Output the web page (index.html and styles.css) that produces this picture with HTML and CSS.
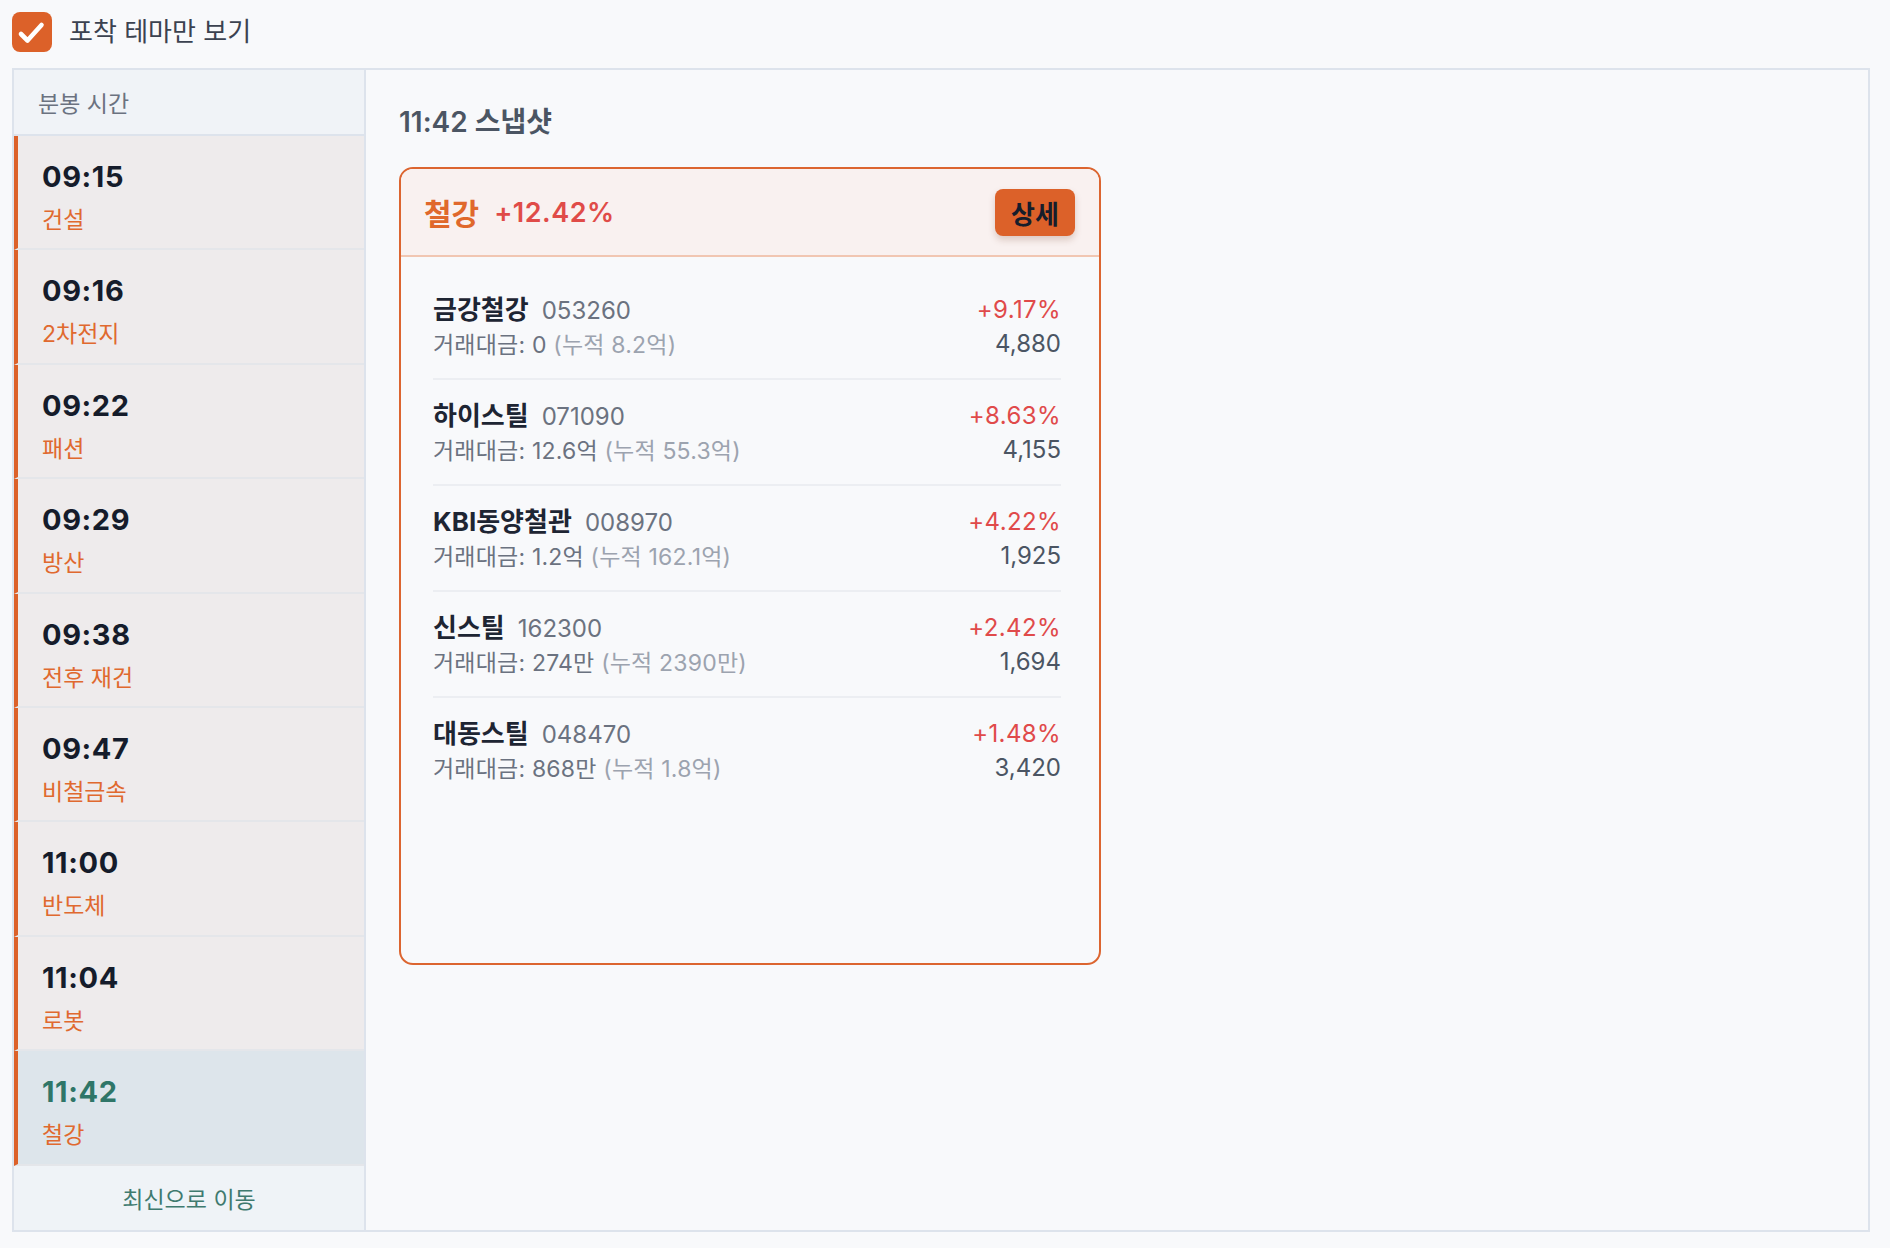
FILE: index.html
```html
<!DOCTYPE html>
<html lang="ko">
<head>
<meta charset="utf-8">
<title>포착 테마 스냅샷</title>
<link rel="stylesheet" href="styles.css">
</head>
<body>
<div class="topbar">
  <span class="checkbox">
    <svg width="40" height="40" viewBox="0 0 40 40"><rect x="0" y="0" width="40" height="40" rx="8" fill="#dc6129"/><path d="M9 22 L15.5 28.5 L29.5 13" fill="none" stroke="#fff" stroke-width="4.6" stroke-linecap="round" stroke-linejoin="round"/></svg>
  </span>
  <span class="toplabel">포착 테마만 보기</span>
</div>
<div class="frame">
  <aside class="sidebar">
    <div class="side-head">분봉 시간</div>
    <ul class="slots">
      <li class="slot"><div class="time">09:15</div><div class="theme">건설</div></li>
      <li class="slot"><div class="time">09:16</div><div class="theme">2차전지</div></li>
      <li class="slot"><div class="time">09:22</div><div class="theme">패션</div></li>
      <li class="slot"><div class="time">09:29</div><div class="theme">방산</div></li>
      <li class="slot"><div class="time">09:38</div><div class="theme">전후 재건</div></li>
      <li class="slot"><div class="time">09:47</div><div class="theme">비철금속</div></li>
      <li class="slot"><div class="time">11:00</div><div class="theme">반도체</div></li>
      <li class="slot"><div class="time">11:04</div><div class="theme">로봇</div></li>
      <li class="slot active"><div class="time">11:42</div><div class="theme">철강</div></li>
    </ul>
    <div class="side-foot">최신으로 이동</div>
  </aside>
  <main class="content">
    <h2 class="snap-title">11:42 스냅샷</h2>
    <section class="card">
      <header class="card-head">
        <span class="theme-name">철강</span>
        <span class="theme-rate">+12.42%</span>
        <button class="detail">상세</button>
      </header>
      <ul class="stocks">
        <li class="stock">
          <div class="info"><div class="name">금강철강<span class="code">053260</span></div><div class="sub">거래대금: 0 <span class="acc">(누적 8.2억)</span></div></div>
          <div class="right"><div class="rate">+9.17%</div><div class="price">4,880</div></div>
        </li>
        <li class="stock">
          <div class="info"><div class="name">하이스틸<span class="code">071090</span></div><div class="sub">거래대금: 12.6억 <span class="acc">(누적 55.3억)</span></div></div>
          <div class="right"><div class="rate">+8.63%</div><div class="price">4,155</div></div>
        </li>
        <li class="stock">
          <div class="info"><div class="name">KBI동양철관<span class="code">008970</span></div><div class="sub">거래대금: 1.2억 <span class="acc">(누적 162.1억)</span></div></div>
          <div class="right"><div class="rate">+4.22%</div><div class="price">1,925</div></div>
        </li>
        <li class="stock">
          <div class="info"><div class="name">신스틸<span class="code">162300</span></div><div class="sub">거래대금: 274만 <span class="acc">(누적 2390만)</span></div></div>
          <div class="right"><div class="rate">+2.42%</div><div class="price">1,694</div></div>
        </li>
        <li class="stock">
          <div class="info"><div class="name">대동스틸<span class="code">048470</span></div><div class="sub">거래대금: 868만 <span class="acc">(누적 1.8억)</span></div></div>
          <div class="right"><div class="rate">+1.48%</div><div class="price">3,420</div></div>
        </li>
      </ul>
    </section>
  </main>
</div>
</body>
</html>
```
FILE: styles.css
```css
* { box-sizing: border-box; }
html, body { margin: 0; }
body {
  padding: 12px 0 0 12px;
  background: #f8f9fb;
  font-family: Inter, "Noto Sans CJK KR", "Noto Sans", sans-serif;
  color: #1e2533;
}
ul { margin: 0; padding: 0; list-style: none; }

.topbar {
  display: flex;
  align-items: center;
  gap: 17px;
  height: 40px;
}
.checkbox { display: flex; width: 40px; height: 40px; }
.toplabel {
  font-size: 26px;
  line-height: 40px;
  color: #3b4250;
}

.frame {
  margin-top: 16px;
  width: 1858px;
  height: 1164px;
  display: flex;
  border: 2px solid #dde3ec;
}

.sidebar {
  width: 352px;
  flex: none;
  display: flex;
  flex-direction: column;
  border-right: 2px solid #dde3ec;
}
.side-head {
  height: 66px;
  flex: none;
  display: flex;
  align-items: center;
  padding-left: 24px;
  background: #f0f3f7;
  border-bottom: 2px solid #dde3ec;
  font-size: 23px;
  color: #6b7280;
}
.slot {
  height: 114.4px;
  padding: 23px 20px 0 24px;
  background: #eeebec;
  border-left: 4px solid #dc6129;
  border-bottom: 2px solid #e4e6ea;
}
.slot .time {
  font-size: 29px;
  font-weight: 700;
  line-height: 36px;
  letter-spacing: 0.6px;
  color: #151c2b;
}
.slot .theme {
  margin-top: 10px;
  font-size: 23px;
  line-height: 30px;
  color: #e0692f;
}
.slot.active { background: #dde5eb; }
.slot.active .time { color: #2f7668; }
.side-foot {
  flex: 1;
  display: flex;
  align-items: center;
  justify-content: center;
  background: #eff3f7;
  font-size: 23px;
  color: #3f7a6f;
}

.content {
  flex: 1;
  padding: 34px 0 0 33px;
}
.snap-title {
  margin: 0;
  font-size: 28px;
  font-weight: 600;
  line-height: 36px;
  color: #4b5563;
}
.card {
  margin-top: 27px;
  width: 702px;
  height: 798px;
  border: 2px solid #dc6530;
  border-radius: 14px;
  overflow: hidden;
}
.card-head {
  height: 88px;
  display: flex;
  align-items: center;
  padding: 0 24px 0 23px;
  background: #f9f1f0;
  border-bottom: 2px solid #f1c6b2;
}
.theme-name {
  font-size: 30px;
  font-weight: 700;
  color: #e0682c;
}
.theme-rate {
  margin-left: 15px;
  font-size: 27px;
  font-weight: 600;
  letter-spacing: 0.5px;
  color: #e04b48;
}
.detail {
  margin-left: auto;
  width: 80px;
  height: 47px;
  padding: 0;
  border: none;
  border-radius: 8px;
  background: #dc6129;
  box-shadow: 0 4px 7px rgba(120, 60, 30, 0.22);
  font-family: inherit;
  font-size: 26px;
  font-weight: 700;
  color: #161d2b;
}

.stocks { padding: 17px 38px 0 32px; }
.stock {
  height: 106px;
  display: flex;
  justify-content: space-between;
  padding: 18px 0;
  border-bottom: 2px solid #eceef2;
}
.stock:last-child { border-bottom: none; }
.name {
  font-size: 26px;
  font-weight: 700;
  line-height: 36px;
  color: #1e2533;
}
.code {
  margin-left: 13px;
  font-size: 24px;
  font-weight: 400;
  color: #6b7280;
}
.sub {
  font-size: 23px;
  line-height: 32px;
  letter-spacing: 0.2px;
  color: #6b7280;
}
.acc { color: #9ca3af; }
.right { text-align: right; }
.rate {
  font-size: 24px;
  line-height: 36px;
  letter-spacing: 0.4px;
  color: #e04a4a;
}
.price {
  font-size: 24px;
  line-height: 32px;
  color: #4b5563;
}
```
